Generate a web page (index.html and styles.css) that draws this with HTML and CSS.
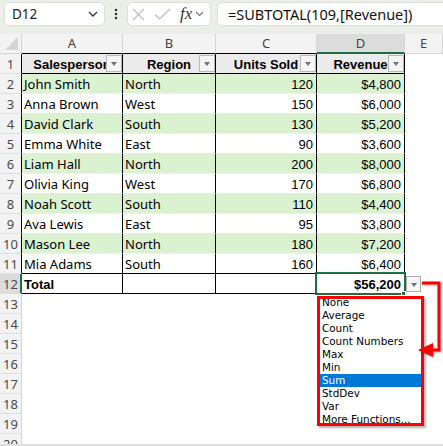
FILE: index.html
```html
<!DOCTYPE html>
<html>
<head>
<meta charset="utf-8">
<link rel="stylesheet" href="styles.css">
</head>
<body>
<div class="app">
  <div class="fbar">
    <div class="namebox">
      <span class="nbtext">D12</span>
      <svg class="nbchev" width="10" height="6" viewBox="0 0 10 6"><polyline points="1,1 5,5 9,1" fill="none" stroke="#333" stroke-width="1.3"/></svg>
    </div>
    <div class="dots">
      <svg width="4" height="12" viewBox="0 0 4 12"><circle cx="2" cy="2" r="1.3" fill="#333"/><circle cx="2" cy="6" r="1.3" fill="#333"/><circle cx="2" cy="10" r="1.3" fill="#333"/></svg>
    </div>
    <div class="fxbox">
      <svg class="ic-x" width="13" height="13" viewBox="0 0 13 13"><path d="M1 1 L12 12 M12 1 L1 12" stroke="#bdbdbd" stroke-width="1.2" fill="none"/></svg>
      <svg class="ic-check" width="17" height="12" viewBox="0 0 17 12"><polyline points="1,6.5 5.5,11 16,1" fill="none" stroke="#bdbdbd" stroke-width="1.2"/></svg>
      <span class="fx">fx</span>
      <svg class="fxchev" width="9" height="6" viewBox="0 0 9 6"><polyline points="1,1 4.5,4.5 8,1" fill="none" stroke="#777" stroke-width="1.1"/></svg>
    </div>
    <div class="formula">=SUBTOTAL(109,[Revenue])</div>
  </div>

  <div class="sheet">
    <div class="corner"><svg width="14" height="14" viewBox="0 0 14 14"><polygon points="13,0 13,13 0,13" fill="#d4d4d4"/></svg></div>
    <div class="ch tb">A</div>
    <div class="ch tb">B</div>
    <div class="ch tb">C</div>
    <div class="ch sel">D</div>
    <div class="ch">E</div>

    <div class="rh tl">1</div>
    <div class="c t hd">Salesperson<span class="fb"></span></div>
    <div class="c t hd">Region<span class="fb"></span></div>
    <div class="c t hd">Units Sold<span class="fb"></span></div>
    <div class="c t hd">Revenue<span class="fb"></span></div>
    <div class="c"></div>

    <div class="rh tl">2</div>
    <div class="c t g">John Smith</div><div class="c t g">North</div><div class="c t g num">120</div><div class="c t g num">$4,800</div><div class="c"></div>
    <div class="rh tl">3</div>
    <div class="c t">Anna Brown</div><div class="c t">West</div><div class="c t num">150</div><div class="c t num">$6,000</div><div class="c"></div>
    <div class="rh tl">4</div>
    <div class="c t g">David Clark</div><div class="c t g">South</div><div class="c t g num">130</div><div class="c t g num">$5,200</div><div class="c"></div>
    <div class="rh tl">5</div>
    <div class="c t">Emma White</div><div class="c t">East</div><div class="c t num">90</div><div class="c t num">$3,600</div><div class="c"></div>
    <div class="rh tl">6</div>
    <div class="c t g">Liam Hall</div><div class="c t g">North</div><div class="c t g num">200</div><div class="c t g num">$8,000</div><div class="c"></div>
    <div class="rh tl">7</div>
    <div class="c t">Olivia King</div><div class="c t">West</div><div class="c t num">170</div><div class="c t num">$6,800</div><div class="c"></div>
    <div class="rh tl">8</div>
    <div class="c t g">Noah Scott</div><div class="c t g">South</div><div class="c t g num">110</div><div class="c t g num">$4,400</div><div class="c"></div>
    <div class="rh tl">9</div>
    <div class="c t">Ava Lewis</div><div class="c t">East</div><div class="c t num">95</div><div class="c t num">$3,800</div><div class="c"></div>
    <div class="rh tl">10</div>
    <div class="c t g">Mason Lee</div><div class="c t g">North</div><div class="c t g num">180</div><div class="c t g num">$7,200</div><div class="c"></div>
    <div class="rh tl">11</div>
    <div class="c t lb">Mia Adams</div><div class="c t lb">South</div><div class="c t lb num">160</div><div class="c t lb num">$6,400</div><div class="c"></div>
    <div class="rh tl sel">12</div>
    <div class="c t lb bold">Total</div><div class="c t lb"></div><div class="c t lb"></div><div class="c t lb num bold">$56,200</div><div class="c"></div>

    <div class="rh">13</div><div class="blank"></div>
    <div class="rh">14</div><div class="blank"></div>
    <div class="rh">15</div><div class="blank"></div>
    <div class="rh">16</div><div class="blank"></div>
    <div class="rh">17</div><div class="blank"></div>
    <div class="rh">18</div><div class="blank"></div>
    <div class="rh">19</div><div class="blank"></div>
    <div class="rh">20</div><div class="blank"></div>
  </div>
  <div class="hbar"></div>

  <div class="selbox"></div>
  <div class="handle"></div>
  <div class="ddbtn"></div>

  <ul class="list">
    <li>None</li>
    <li>Average</li>
    <li>Count</li>
    <li>Count Numbers</li>
    <li>Max</li>
    <li>Min</li>
    <li class="on">Sum</li>
    <li>StdDev</li>
    <li>Var</li>
    <li>More Functions...</li>
  </ul>
  <div class="redbox"></div>
  <svg class="arrow" width="33" height="90" viewBox="0 0 33 90">
    <polyline points="12,9 29,9 29,76 20,76" fill="none" stroke="#ff0000" stroke-width="3" stroke-linejoin="miter"/>
    <polygon points="8,76 23,69 23,83" fill="#ff0000"/>
  </svg>
</div>
</body>
</html>
```

FILE: styles.css
```css
html, body {
  margin: 0;
  padding: 0;
  background: #ffffff;
}

.app {
  position: relative;
  width: 443px;
  height: 446px;
  overflow: hidden;
  font-family: "Noto Sans", "DejaVu Sans", sans-serif;
  color: #000;
}

/* formula bar */
.fbar {
  height: 34px;
  box-sizing: border-box;
  padding-top: 2px;
  display: flex;
  align-items: flex-start;
  background: #ebefe7;
}

.namebox {
  margin-left: 4px;
  width: 101px;
  height: 24px;
  box-sizing: border-box;
  background: #fff;
  border: 1px solid #dde0da;
  border-radius: 5px;
  display: flex;
  align-items: center;
  padding-left: 7px;
  padding-right: 6px;
}

.nbtext {
  flex: 1;
  font-size: 13.5px;
  color: #222;
}

.nbchev {
  display: block;
}

.dots {
  width: 22px;
  height: 24px;
  display: flex;
  align-items: center;
  justify-content: center;
}

.dots svg {
  display: block;
}

.fxbox {
  width: 84px;
  height: 24px;
  box-sizing: border-box;
  background: #fff;
  border: 1px solid #dde0da;
  border-radius: 5px;
  display: flex;
  align-items: center;
  padding-left: 4px;
}

.ic-x {
  display: block;
  margin-right: 9px;
}

.ic-check {
  display: block;
  margin-right: 9px;
}

.fx {
  font-family: "Liberation Serif", "DejaVu Serif", serif;
  font-style: italic;
  font-size: 17px;
  color: #333;
  margin-right: 3px;
  line-height: 22px;
}

.fxchev {
  display: block;
}

.formula {
  flex: 1;
  margin-left: 6px;
  height: 24px;
  box-sizing: border-box;
  background: #fff;
  border: 1px solid #dde0da;
  border-right: none;
  border-radius: 5px 0 0 5px;
  padding-left: 10px;
  font-size: 14.5px;
  line-height: 22px;
  color: #111;
  white-space: nowrap;
}

/* sheet grid */
.sheet {
  height: 410px;
  overflow: hidden;
  display: grid;
  grid-template-columns: 22px 101px 93px 101px 88px 38px;
  grid-auto-rows: 20px;
}

.corner {
  background: #f3f3f3;
  border-right: 1px solid #d5d5d5;
  border-bottom: 1px solid #d5d5d5;
  box-sizing: border-box;
  display: flex;
  align-items: flex-end;
  justify-content: flex-end;
  padding: 0 2px 2px 0;
}

.corner svg {
  display: block;
}

.ch {
  background: #f3f3f3;
  border-right: 1px solid #d5d5d5;
  border-bottom: 1px solid #d5d5d5;
  box-sizing: border-box;
  text-align: center;
  font-size: 13px;
  line-height: 19px;
  color: #444;
}

.ch.tb {
  border-bottom-color: #000;
}

.ch.sel {
  background: #dcdcdc;
  border-bottom: 2px solid #1e6e42;
  line-height: 18px;
}

.rh {
  background: #f3f3f3;
  border-right: 1px solid #d5d5d5;
  border-bottom: 1px solid #dedede;
  box-sizing: border-box;
  text-align: center;
  font-size: 13px;
  line-height: 20px;
  color: #4a4a4a;
}

.rh.tl {
  border-right-color: #000;
}

.rh.sel {
  background: #dcdcdc;
  border-right: 2px solid #1e6e42;
  padding-left: 1px;
}

.c {
  position: relative;
  box-sizing: border-box;
  overflow: hidden;
  white-space: nowrap;
  font-size: 13px;
  line-height: 21px;
  padding: 0 3px 0 2px;
}

.c.t {
  border-right: 1px solid #000;
  border-bottom: 1px solid #e8e8e8;
}

.c.g {
  background: #daf2d0;
  border-bottom-color: #eaf5e4;
}

.c.lb {
  border-bottom-color: #000;
}

.c.num {
  text-align: right;
  font-family: "Liberation Sans", Arial, sans-serif;
}

.c.bold {
  font-family: "Liberation Sans", Arial, sans-serif;
  font-weight: bold;
}

.c.hd {
  background: #ebebeb;
  border-bottom-color: #000;
  text-align: center;
  font-family: "Liberation Sans", Arial, sans-serif;
  font-weight: bold;
  padding: 0;
}

.fb {
  position: absolute;
  right: 0;
  top: 1px;
  width: 16px;
  height: 17px;
  box-sizing: border-box;
  background: #f4f4f4;
  border: 1px solid #b9b9b9;
}

.fb::after {
  content: "";
  position: absolute;
  left: 4px;
  top: 6px;
  border-left: 3.5px solid transparent;
  border-right: 3.5px solid transparent;
  border-top: 4px solid #727272;
}

.blank {
  grid-column: 2 / 7;
}

.hbar {
  height: 2px;
  background: #dedede;
}

/* overlays */
.selbox {
  position: absolute;
  left: 315px;
  top: 272px;
  width: 91px;
  height: 23px;
  box-sizing: border-box;
  border: 2px solid #1e6e42;
}

.handle {
  position: absolute;
  left: 401px;
  top: 291px;
  width: 5px;
  height: 5px;
  box-sizing: border-box;
  background: #1e6e42;
  border: 1px solid #fff;
}

.ddbtn {
  position: absolute;
  left: 406px;
  top: 276px;
  width: 15px;
  height: 16px;
  box-sizing: border-box;
  background: #f7f7f7;
  border: 1px solid #ababab;
}

.ddbtn::after {
  content: "";
  position: absolute;
  left: 3.5px;
  top: 6px;
  border-left: 3.5px solid transparent;
  border-right: 3.5px solid transparent;
  border-top: 4px solid #727272;
}

.list {
  position: absolute;
  left: 319px;
  top: 296px;
  width: 102px;
  height: 130px;
  margin: 0;
  padding: 0;
  list-style: none;
  background: #fff;
  overflow: hidden;
  font-family: "DejaVu Sans", sans-serif;
  font-size: 10.4px;
  line-height: 13px;
  color: #000;
}

.list li {
  padding-left: 3px;
  height: 13px;
  white-space: nowrap;
}

.list li.on {
  background: #0078d7;
  color: #fff;
}

.redbox {
  position: absolute;
  left: 317px;
  top: 296px;
  width: 107px;
  height: 130px;
  box-sizing: border-box;
  border: 3px solid #ff0000;
  box-shadow: 2px 2px 2px rgba(0, 0, 0, 0.3);
}

.arrow {
  position: absolute;
  left: 410px;
  top: 274px;
  filter: drop-shadow(1px 1px 1px rgba(0, 0, 0, 0.35));
}
```
